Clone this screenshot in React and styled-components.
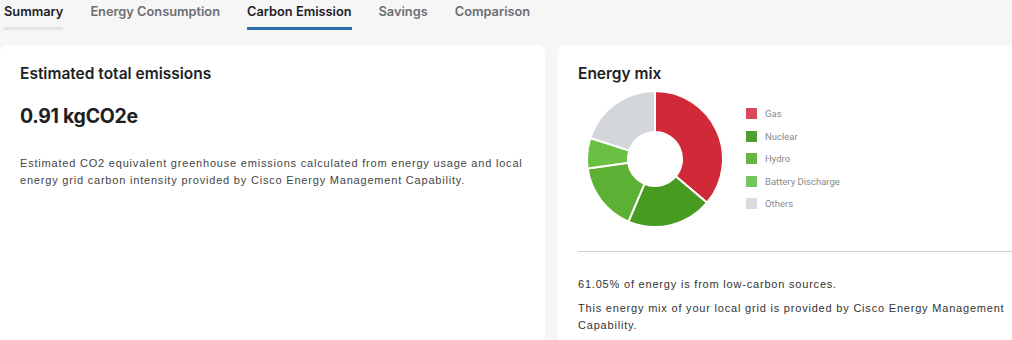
import React from "react";
import styled, { createGlobalStyle } from "styled-components";

const GlobalStyle = createGlobalStyle`
  body {
    margin: 0;
    padding: 0;
    background: #f6f6f6;
    font-family: Inter, "Liberation Sans", sans-serif;
    overflow: hidden;
  }
`;

const tabs = [
  { label: "Summary", state: "visited" },
  { label: "Energy Consumption" },
  { label: "Carbon Emission", state: "active" },
  { label: "Savings" },
  { label: "Comparison" },
];

const mix = [
  { name: "Gas", from: 0, to: 130, color: "#d02a39", swatch: "#d84a57" },
  { name: "Nuclear", from: 130, to: 203, color: "#489b21", swatch: "#509f30" },
  { name: "Hydro", from: 203, to: 262, color: "#5cb033", swatch: "#67b446" },
  { name: "Battery Discharge", from: 262, to: 288, color: "#69c043", swatch: "#77c55a" },
  { name: "Others", from: 288, to: 360, color: "#d3d6db", swatch: "#d9dbe0" },
];

// point on circle, angle clockwise from 12 o'clock
const pt = (cx, cy, r, deg) => {
  const a = ((deg - 90) * Math.PI) / 180;
  return [cx + r * Math.cos(a), cy + r * Math.sin(a)];
};

const slicePath = (cx, cy, ro, ri, from, to) => {
  const large = to - from > 180 ? 1 : 0;
  const [x1, y1] = pt(cx, cy, ro, from);
  const [x2, y2] = pt(cx, cy, ro, to);
  const [x3, y3] = pt(cx, cy, ri, to);
  const [x4, y4] = pt(cx, cy, ri, from);
  return `M${x1} ${y1} A${ro} ${ro} 0 ${large} 1 ${x2} ${y2} L${x3} ${y3} A${ri} ${ri} 0 ${large} 0 ${x4} ${y4} Z`;
};

const Donut = () => (
  <svg width="140" height="140" viewBox="0 0 140 140">
    {mix.map((m) => (
      <path
        key={m.name}
        d={slicePath(70, 70, 68, 27, m.from, m.to)}
        fill={m.color}
        stroke="#fff"
        strokeWidth="2"
        strokeLinejoin="round"
      />
    ))}
  </svg>
);

export default function App() {
  return (
    <>
      <GlobalStyle />
      <Page>
        <TabBar>
          {tabs.map((t) => (
            <Tab key={t.label} state={t.state}>
              {t.label}
            </Tab>
          ))}
        </TabBar>
        <Cards>
          <Card>
            <CardTitle>Estimated total emissions</CardTitle>
            <BigValue>0.91 kgCO2e</BigValue>
            <Note>
              Estimated CO2 equivalent greenhouse emissions calculated from energy usage and local
              energy grid carbon intensity provided by Cisco Energy Management Capability.
            </Note>
          </Card>
          <Card>
            <CardTitle>Energy mix</CardTitle>
            <ChartRow>
              <Donut />
              <Legend>
                {mix.map((m) => (
                  <LegendItem key={m.name}>
                    <Swatch color={m.swatch} />
                    {m.name}
                  </LegendItem>
                ))}
              </Legend>
            </ChartRow>
            <Divider />
            <MixText>
              <Para>61.05% of energy is from low-carbon sources.</Para>
              <Para>
                This energy mix of your local grid is provided by Cisco Energy Management
                Capability.
              </Para>
            </MixText>
          </Card>
        </Cards>
      </Page>
    </>
  );
}

const Page = styled.div`
  width: 1110px;
  height: 340px;
`;

const TabBar = styled.div`
  display: flex;
  gap: 27px;
  padding-left: 4px;
  height: 45px;
  align-items: flex-start;
`;

const Tab = styled.div`
  font-size: 12.8px;
  font-weight: 600;
  line-height: 18px;
  padding: 3px 0 6px;
  color: ${({ state }) => (state ? "#1f2126" : "#6c6e73")};
  border-bottom: 3px solid
    ${({ state }) =>
      state === "active" ? "#2b6cad" : state === "visited" ? "#e3e4e6" : "transparent"};
`;

const Cards = styled.div`
  display: grid;
  grid-template-columns: 545px 552px;
  gap: 13px;
`;

const Card = styled.div`
  background: #fff;
  border-radius: 8px;
  height: 310px;
  padding: 20px 20px 0;
  box-sizing: border-box;
`;

const CardTitle = styled.div`
  font-size: 15.5px;
  font-weight: 600;
  color: #1d1f24;
  line-height: 18px;
`;

const BigValue = styled.div`
  font-size: 19.5px;
  font-weight: 700;
  color: #1d1f24;
  margin-top: 21px;
  letter-spacing: -0.3px;
`;

const Note = styled.p`
  font-family: "Liberation Sans", Arial, sans-serif;
  font-size: 11px;
  line-height: 17px;
  letter-spacing: 0.8px;
  color: #454545;
  margin: 27px 0 0;
  width: 510px;
`;

const ChartRow = styled.div`
  display: flex;
  align-items: flex-start;
  gap: 21px;
  margin-top: 6px;
  padding-left: 7px;
`;

const Legend = styled.div`
  display: flex;
  flex-direction: column;
  gap: 11.5px;
  margin-top: 19px;
`;

const LegendItem = styled.div`
  display: flex;
  align-items: center;
  gap: 8px;
  font-family: Roboto, "Liberation Sans", sans-serif;
  font-size: 9.5px;
  line-height: 11px;
  color: #8a8a8a;
`;

const Swatch = styled.span`
  width: 11px;
  height: 11px;
  background: ${({ color }) => color};
`;

const Divider = styled.div`
  height: 1px;
  background: #cfcfcf;
  margin-top: 22px;
`;

const MixText = styled.div`
  padding-top: 24px;
  width: 440px;
`;

const Para = styled.p`
  font-family: "Liberation Sans", Arial, sans-serif;
  font-size: 11px;
  line-height: 17px;
  letter-spacing: 0.8px;
  color: #333;
  margin: 0 0 7px;
`;
